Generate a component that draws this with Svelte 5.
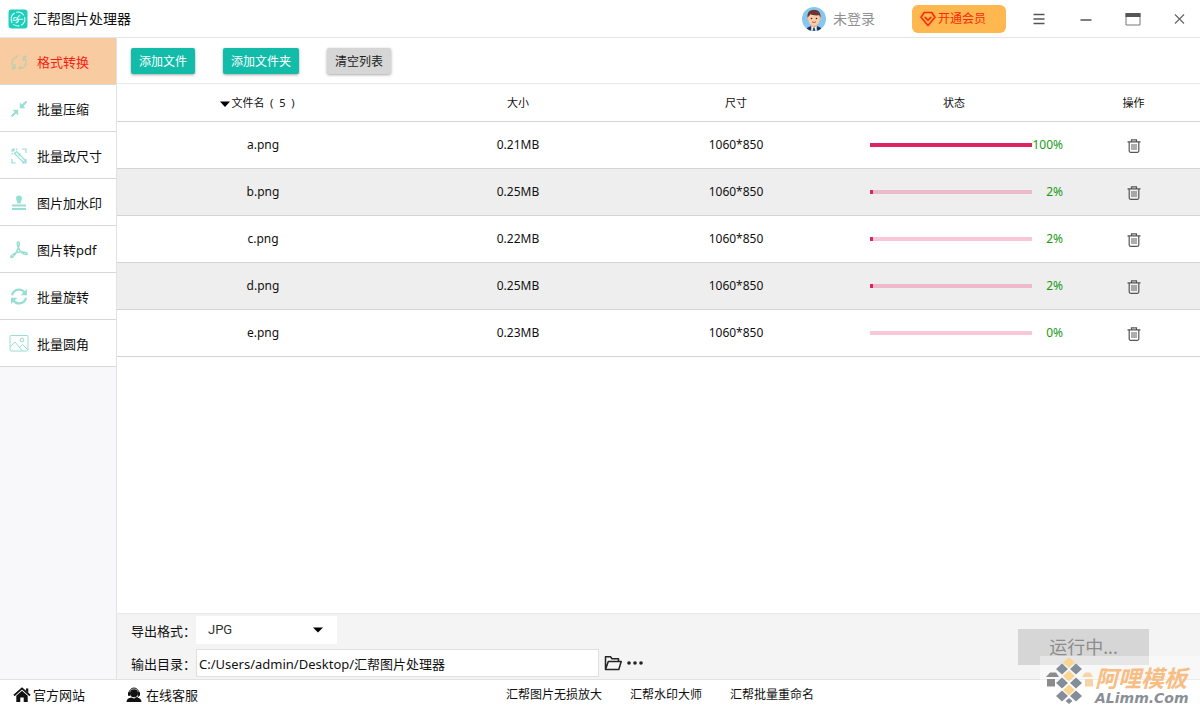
<script>
  const menu = [
    { id: 'convert', label: '格式转换' },
    { id: 'compress', label: '批量压缩' },
    { id: 'resize', label: '批量改尺寸' },
    { id: 'watermark', label: '图片加水印' },
    { id: 'pdf', label: '图片转pdf' },
    { id: 'rotate', label: '批量旋转' },
    { id: 'corner', label: '批量圆角' },
  ];

  const products = ['汇帮图片无损放大', '汇帮水印大师', '汇帮批量重命名'];

  let active = $state('convert');
  let format = $state('JPG');
  let outDir = $state('C:/Users/admin/Desktop/汇帮图片处理器');
  let files = $state([
    { name: 'a.png', size: '0.21MB', dim: '1060*850', progress: 100 },
    { name: 'b.png', size: '0.25MB', dim: '1060*850', progress: 2 },
    { name: 'c.png', size: '0.22MB', dim: '1060*850', progress: 2 },
    { name: 'd.png', size: '0.25MB', dim: '1060*850', progress: 2 },
    { name: 'e.png', size: '0.23MB', dim: '1060*850', progress: 0 },
  ]);

  function remove(name) {
    files = files.filter((f) => f.name !== name);
  }
</script>

<div class="window">
  <header class="titlebar">
    <svg class="logo" viewBox="0 0 20 20" width="20" height="20">
      <rect x="0.5" y="0.5" width="19" height="19" rx="3" fill="#1fcdbb" />
      <g fill="none" stroke="#d9fffa" stroke-width="1.1" stroke-linecap="round">
        <path d="M4 13.6A7 7 0 0 1 6.2 4.2M8.6 3.2A7 7 0 0 1 15.6 6M16.7 8.4A7 7 0 0 1 13.4 16M11 16.9A7 7 0 0 1 5.8 15.6" />
        <path d="M5 11.2h2.6c1.8 0 2-1.2 2.3-2.8.2-1 .8-1.6 2-1.6M8.3 8.8c-1.3-.6-2.3 0-3 1M10.4 10.2h4.4M10.4 10.2c0 2-.6 3.4-2.4 3.6" />
      </g>
    </svg>
    <h1>汇帮图片处理器</h1>

    <button class="account">
      <svg viewBox="0 0 24 24" width="24" height="24">
        <defs><clipPath id="face"><circle cx="12" cy="12" r="12" /></clipPath></defs>
        <g clip-path="url(#face)">
          <rect width="24" height="24" fill="#84c8f2" />
          <path d="M4 24c.3-3.6 3-5 8-5s7.700 1.400 8 5z" fill="#20334d" />
          <path d="M9 17h6v3l-3 2-3-2z" fill="#f0b28e" />
          <path d="M9.500 19.500L12 21l2.500-1.500.5 4.500H9z" fill="#f4f8fc" />
          <path d="M11.200 20.800h1.600L13.400 24h-2.800z" fill="#24558c" />
          <circle cx="6" cy="11.500" r="1.500" fill="#efae88" />
          <circle cx="18" cy="11.500" r="1.500" fill="#efae88" />
          <path d="M6.400 7.500h11.200v5.200c0 3.400-2.600 5.800-5.600 5.800s-5.600-2.400-5.600-5.800z" fill="#fbcda9" />
          <path d="M5.600 10.500C4.800 5.700 7.500 2.800 12 2.800s7.200 2.900 6.400 7.700l-1.200-2.200c-3.200.3-7.200.1-8.900-1.300-.3 1.300-1.400 2-2.700 3.500z" fill="#6a3630" />
          <circle cx="9.500" cy="11.500" r=".8" fill="#33231f" />
          <circle cx="14.500" cy="11.500" r=".8" fill="#33231f" />
          <path d="M10 14.800q2 1.600 4 0" fill="none" stroke="#c94a40" stroke-width=".9" />
        </g>
      </svg>
      未登录
    </button>

    <button class="vip">
      <svg viewBox="0 0 16 16" width="16" height="16" fill="none" stroke="#fa2a0a" stroke-width="1.600" stroke-linejoin="round" stroke-linecap="round">
        <path d="M4.200 1.500h7.600L15 6.200 8 14.500 1 6.200z" />
        <path d="M5.200 6.400L8 9.300l2.800-2.900" />
      </svg>
      开通会员
    </button>

    <nav class="winctl" aria-label="窗口">
      <button aria-label="菜单">
        <svg viewBox="0 0 16 16" width="16" height="16" stroke="#555" stroke-width="1.500"><path d="M2.500 3.500h11M2.500 8h11M2.500 12.500h11" /></svg>
      </button>
      <button aria-label="最小化">
        <svg viewBox="0 0 16 16" width="16" height="16" stroke="#555" stroke-width="1.500"><path d="M2.500 9h11" /></svg>
      </button>
      <button aria-label="最大化">
        <svg viewBox="0 0 16 16" width="16" height="16"><path d="M1 2.500h14V14H1z" fill="#fff" stroke="#777" /><path d="M.5 2h15v4H.5z" fill="#555" /></svg>
      </button>
      <button aria-label="关闭">
        <svg viewBox="0 0 16 16" width="16" height="16" stroke="#666" stroke-width="1.200"><path d="M3 3.500l9 9M12 3.500l-9 9" /></svg>
      </button>
    </nav>
  </header>

  <div class="body">
    <aside class="sidebar">
      {#each menu as item (item.id)}
        <button class="menu-item" class:active={active === item.id} onclick={() => (active = item.id)}>
          <svg viewBox="0 0 20 20" width="20" height="20" fill="none" stroke="#96dfd2" stroke-width="1.500">
            {#if item.id === 'convert'}
              <g stroke="#bccfae" stroke-width="1.400">
                <path d="M9 3.500L4.500 7c-2.500 3-1.800 7 1.500 9.500M6 16.500V12M6 16.500H2.500" />
                <path d="M9.500 16.500c5 .5 8-3 7.500-7-.3-2-1.300-3.500-2.500-5M14.500 4.500V9M14.500 4.500H18M9.500 16.500l2.500-2.500" />
              </g>
            {:else if item.id === 'compress'}
              <path d="M17.500 2.500L12 8M2.500 17.500L8 12" stroke-width="2" />
              <path d="M10.800 3.500l5.700 5.700h-5.700zM9.200 16.500L3.500 10.800h5.700z" fill="#96dfd2" stroke="none" />
            {:else if item.id === 'resize'}
              <g stroke-width="1.200">
                <path d="M13 3h4v4M17 13v4h-4M7 17H3v-4" />
                <path d="M7.500 5.500l9 9-2 2-9-9zM9.500 9.500l2-2" />
                <path d="M5 2v3M2 5h3M2.800 2.800l1.500 1.500M8 2.500L7.200 4M2.500 8L4 7.200" />
              </g>
            {:else if item.id === 'watermark'}
              <path d="M10 2.500a3 3 0 0 1 3 3c0 1.600-1.300 2.300-1.300 4v1H8.300v-1c0-1.700-1.300-2.400-1.300-4a3 3 0 0 1 3-3z" fill="#96dfd2" stroke="none" />
              <path d="M3 12.500h14M3 16h14" stroke-width="1.800" />
            {:else if item.id === 'pdf'}
              <path d="M1.800 17c.5-2.800 5.800-4.600 9.200-4.900 3.300-.3 7.200.3 7.200 1.700 0 1.500-3.700.5-5.900-1.700C9.800 9.400 8.300 5.500 8.300 2.900c0-1.300 2-1.400 2 .2 0 2.900-2 7.700-4.500 11.600-1.500 2.300-3.500 3.700-4 2.300z" />
            {:else if item.id === 'rotate'}
              <path d="M3 8.300A7 7 0 0 1 15.500 5.500M17 10.700A7 7 0 0 1 4.500 13.500" stroke-width="2.200" />
              <path d="M18 2v6.300h-6.300zM2 17v-6.300h6.300z" fill="#96dfd2" stroke="none" />
            {:else}
              <g stroke-width="1">
                <rect x="1" y="1.500" width="18" height="15.500" rx="1" />
                <path d="M1 13l5-5 7 8.500M10.500 13.500l3-3 5.500 5.500" />
                <circle cx="13" cy="6" r="1.900" />
              </g>
            {/if}
          </svg>
          {item.label}
        </button>
      {/each}
    </aside>

    <main class="content">
      <div class="toolbar">
        <button class="btn">添加文件</button>
        <button class="btn">添加文件夹</button>
        <button class="btn grey">清空列表</button>
      </div>

      <div class="list">
        <table>
          <colgroup>
            <col />
            <col class="mid" />
            <col class="mid" />
            <col class="mid" />
            <col class="last" />
          </colgroup>
          <thead>
            <tr>
              <th class="name-head">
                <svg viewBox="0 0 10 6" width="10" height="6"><path d="M0 0.500h10L5 6z" /></svg>
                文件名&nbsp; (&nbsp; {files.length}&nbsp; )
              </th>
              <th>大小</th>
              <th>尺寸</th>
              <th>状态</th>
              <th>操作</th>
            </tr>
          </thead>
          <tbody>
            {#each files as file (file.name)}
              <tr>
                <td>{file.name}</td>
                <td>{file.size}</td>
                <td>{file.dim}</td>
                <td>
                  <div class="status">
                    <progress max="100" value={file.progress} aria-label={file.name}></progress>
                    <span>{file.progress}%</span>
                  </div>
                </td>
                <td>
                  <button class="trash" aria-label="删除" onclick={() => remove(file.name)}>
                    <svg viewBox="0 0 14 14" width="14" height="14" fill="none" stroke="#555" stroke-width="1.200">
                      <path d="M.5 2.800h13M4.500 2.500V.8h5v1.700M2.200 2.800v9.300c0 .8.500 1.200 1.300 1.200h7c.8 0 1.300-.4 1.300-1.200V2.800" />
                      <path d="M5 5v6M7 5v6M9 5v6" stroke="#777" />
                    </svg>
                  </button>
                </td>
              </tr>
            {/each}
          </tbody>
        </table>
      </div>

      <section class="output">
        <div class="fields">
          <label for="format">导出格式：</label>
          <div class="select">
            <select id="format" bind:value={format}>
              <option>JPG</option>
              <option>PNG</option>
              <option>BMP</option>
            </select>
            <svg viewBox="0 0 10 6" width="10" height="6"><path d="M0 0.500h10L5 5.500z" /></svg>
          </div>
          <label for="outdir">输出目录：</label>
          <div class="path">
            <input id="outdir" type="text" bind:value={outDir} />
            <button aria-label="打开目录">
              <svg viewBox="0 0 18 16" width="18" height="16" fill="none" stroke="#222" stroke-width="1.500" stroke-linejoin="round">
                <path d="M1.500 14.500V1.800h5l1.500 2h6.500v2.700M1.500 14.500L4.300 6.500h12.900L14.800 14.500z" />
              </svg>
            </button>
            <button aria-label="选择目录">
              <svg viewBox="0 0 16 16" width="16" height="16" fill="#222"><circle cx="2" cy="8" r="1.800" /><circle cx="8" cy="8" r="1.800" /><circle cx="14" cy="8" r="1.800" /></svg>
            </button>
          </div>
        </div>
        <button class="run" disabled>运行中...</button>
      </section>
    </main>
  </div>

  <footer class="footer">
    <a class="site" href="#site">
      <svg viewBox="0 0 18 16" width="18" height="16">
        <path d="M1 8.500L9 1.300l8 7.200" fill="none" stroke="#111" stroke-width="1.700" />
        <path d="M13 1.500h2.300v4.300L13 3.700zM3.300 8.700L9 3.700l5.700 5V15h-4v-4.500H7.300V15h-4z" fill="#111" />
      </svg>
      官方网站
    </a>
    <a class="service" href="#service">
      <svg viewBox="0 0 16 16" width="16" height="16" fill="#111">
        <path d="M3 6.500a5 5.500 0 0 1 10 0" fill="none" stroke="#111" stroke-width="1" />
        <circle cx="8" cy="6.300" r="4" />
        <rect x="2" y="5" width="2.200" height="4" rx="1" />
        <rect x="11.800" y="5" width="2.200" height="4" rx="1" />
        <path d="M12.800 8.500c0 1.500-1.500 2.300-3.300 2.300" fill="none" stroke="#111" />
        <path d="M.5 15c0-3 2-4.300 5-4.600L8 11.500l2.500-1.100c3 .3 5 1.600 5 4.600z" />
      </svg>
      在线客服
    </a>
    <nav class="products">
      {#each products as product}
        <a href="#product">{product}</a>
      {/each}
    </nav>
  </footer>

  <div class="mark">
    <svg viewBox="0 0 47 46" width="47" height="46">
      <g fill="#f8d590">
        <path d="M23-1l6 5.500-6 5.500-6-5.500zM23 12.500l6 5.500-6 5.500-6-5.500zM23 26.500l6 5.500-6 5.500-6-5.500z" />
        <path d="M39 14.500h5l3 4.500H36zM39 21h8v7.500h-8z" fill="#f8d3a5" />
      </g>
      <g fill="#848e99">
        <path d="M16 5.500l6 5.500-6 5.500-6-5.500zM30 5.500l6 5.500-6 5.500-6-5.500zM16 19.500l6 5.500-6 5.500-6-5.500zM30 19.500l6 5.500-6 5.500-6-5.500zM16 32.500l6 5.500-6 5.500-6-5.500zM30 32.500l6 5.500-6 5.500-6-5.500zM23 40l3.500 3-3.500 3-3.500-3z" />
        <path d="M4 14.500h6l3 4.500H0zM1 21h8v7.500H1z" fill="#8b8b8b" />
      </g>
    </svg>
    <div>
      <strong>阿哩模板</strong>
      <em>ALimm.Com</em>
    </div>
  </div>
</div>

<style>
  :global(body) {
    margin: 0;
  }
  .window {
    position: relative;
    display: flex;
    flex-direction: column;
    height: 100vh;
    background: #fff;
    color: #111;
    font: 13px/20px 'Noto Sans', 'Noto Sans CJK SC', sans-serif;
  }
  button, input, select {
    font: inherit;
    color: inherit;
    border: 0;
    padding: 0;
    margin: 0;
    background: none;
  }
  button { cursor: pointer; }
  a {
    color: inherit;
    text-decoration: none;
  }
  svg {
    display: block;
    flex-shrink: 0;
  }

  .titlebar {
    display: flex;
    align-items: center;
    box-sizing: border-box;
    height: 38px;
    padding: 0 12px 0 8px;
    border-bottom: 1px solid #e6e6e8;
  }
  h1 {
    flex: 1;
    margin: 0 0 0 5px;
    font-size: 14px;
    font-weight: 400;
  }
  .account {
    display: flex;
    align-items: center;
    gap: 7px;
    margin-right: 37px;
    color: #909090;
    font-size: 14px;
  }
  .vip {
    display: flex;
    align-items: center;
    gap: 2px;
    box-sizing: border-box;
    width: 94px;
    height: 28px;
    padding-left: 8px;
    border-radius: 6px;
    background: #ffb74f;
    color: #fa2a0a;
    font-size: 12px;
  }
  .winctl {
    display: flex;
    gap: 31px;
    margin-left: 25px;
  }

  .body {
    display: flex;
    flex: 1;
    min-height: 0;
  }
  .sidebar {
    display: flex;
    flex-direction: column;
    width: 116px;
    border-right: 1px solid #e2e2e6;
    background: #f8f8fb;
  }
  .menu-item {
    display: flex;
    align-items: center;
    gap: 8px;
    height: 47px;
    padding: 2px 0 0 9px;
    border-bottom: 1px solid #d8d8d8;
    background: #fff;
    text-align: left;
  }
  .menu-item.active {
    background: #f8cba0;
    color: #fb1d12;
  }

  .content {
    display: flex;
    flex: 1;
    flex-direction: column;
    min-width: 0;
  }
  .toolbar {
    display: flex;
    gap: 28px;
    padding: 10px 14px 9px;
    border-bottom: 1px solid #e8e8e8;
  }
  .btn {
    height: 26px;
    padding: 2px 8px 0;
    border-radius: 2px;
    background: #12bca9;
    box-shadow: 0 1px 3px rgba(0, 0, 0, 0.35);
    color: #fff;
    font-size: 12px;
  }
  .btn.grey {
    background: #d6d6d6;
    color: #222;
  }

  .list {
    flex: 1;
    overflow: auto;
  }
  table {
    width: 100%;
    table-layout: fixed;
    border-collapse: separate;
    border-spacing: 0;
    font-size: 12px;
  }
  .mid { width: 218px; }
  .last { width: 137px; }
  th, td {
    height: 46px;
    padding: 0;
    border-bottom: 1px solid #d4d4d4;
    font-weight: 400;
    text-align: center;
  }
  th {
    height: 37px;
    font-size: 11px;
  }
  th:last-child, td:last-child { padding-left: 4px; }
  th.name-head { padding-right: 12px; }
  .name-head svg {
    display: inline-block;
    margin-right: -1px;
    vertical-align: middle;
  }
  tbody tr:nth-child(even) { background: #eee; }
  .status {
    display: flex;
    align-items: center;
    padding-left: 25px;
    color: #189a18;
  }
  .status span {
    width: 31px;
    text-align: right;
  }
  progress {
    flex: 1;
    min-width: 0;
    height: 4px;
    border: 0;
    appearance: none;
    background: none;
  }
  progress::-webkit-progress-bar { background: rgba(233, 30, 99, 0.25); }
  progress::-webkit-progress-value { background: #dc2463; }
  .trash { vertical-align: middle; }

  .output {
    display: flex;
    align-items: center;
    justify-content: space-between;
    padding: 2px 51px 2px 14px;
    border-top: 1px solid #e8e8e8;
    background: #f4f4f4;
  }
  .fields {
    display: grid;
    grid-template-columns: 65px auto;
    gap: 5px 0;
    align-items: center;
  }
  .fields label {
    padding-top: 2px;
    white-space: nowrap;
  }
  .select {
    display: grid;
    align-items: center;
    width: 141px;
  }
  .select select, .select svg { grid-area: 1 / 1; }
  .select select {
    height: 28px;
    padding-left: 12px;
    appearance: none;
    background: #fff;
    font-family: Roboto, sans-serif;
    font-size: 13px;
    color: #333;
  }
  .select svg {
    justify-self: end;
    margin-right: 14px;
    pointer-events: none;
  }
  .path {
    display: flex;
    align-items: center;
    gap: 5px;
  }
  .path input {
    box-sizing: border-box;
    width: 403px;
    height: 28px;
    padding: 0 2px;
    border: 1px solid #e0e0e0;
    background: #fff;
  }
  .run {
    width: 131px;
    height: 36px;
    background: #d6d6d6;
    color: #8c8c8c;
    font-size: 18px;
  }

  .footer {
    display: flex;
    align-items: center;
    box-sizing: border-box;
    height: 28px;
    padding: 3px 0 0 13px;
    border-top: 1px solid #e2e2e2;
  }
  .footer a {
    display: flex;
    align-items: center;
    gap: 2px;
  }
  .footer .service {
    gap: 4px;
    margin-left: 41px;
  }
  .products {
    display: flex;
    flex: 1;
    justify-content: center;
    gap: 28px;
    padding-right: 78px;
    font-size: 12px;
  }

  .mark {
    position: absolute;
    right: 0;
    bottom: 0;
    display: flex;
    gap: 2px;
    box-sizing: border-box;
    width: 160px;
    height: 51px;
    padding: 2px 0 0 6px;
    background: rgba(255, 255, 255, 0.4);
    pointer-events: none;
  }
  .mark div {
    display: flex;
    flex-direction: column;
    padding-top: 8px;
  }
  .mark strong {
    color: #f7bd83;
    font-size: 23px;
    font-style: italic;
    line-height: 24px;
  }
  .mark em {
    color: #8a8f96;
    font: italic bold 14px/16px 'DejaVu Sans', sans-serif;
  }
</style>
